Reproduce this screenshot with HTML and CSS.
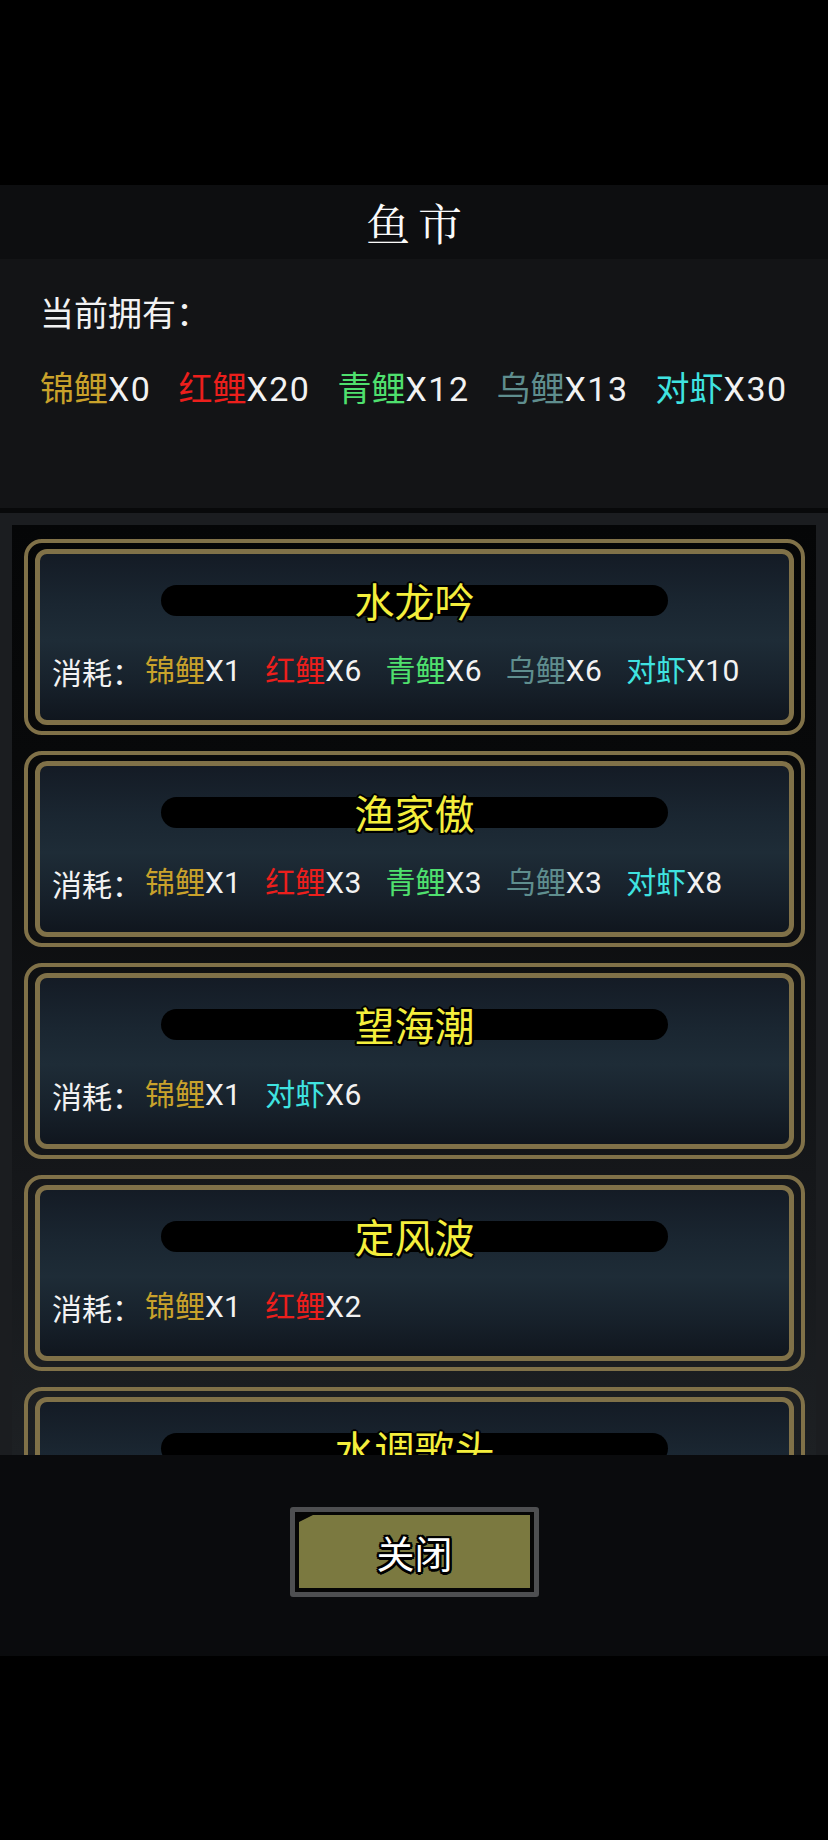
FILE: index.html
```html
<!DOCTYPE html>
<html lang="zh-CN">
<head>
<meta charset="utf-8">
<title>鱼市</title>
<link rel="stylesheet" href="styles.css">
</head>
<body>
<div class="screen">
  <div class="top-space"></div>
  <div class="titlebar"><span class="title">鱼市</span></div>
  <div class="owned">
    <div class="owned-label">当前拥有：</div>
    <div class="owned-row">
      <span class="item"><span class="c-gold">锦鲤</span><span class="num">X0</span></span>
      <span class="item"><span class="c-red">红鲤</span><span class="num">X20</span></span>
      <span class="item"><span class="c-green">青鲤</span><span class="num">X12</span></span>
      <span class="item"><span class="c-grey">乌鲤</span><span class="num">X13</span></span>
      <span class="item"><span class="c-cyan">对虾</span><span class="num">X30</span></span>
    </div>
  </div>
  <div class="sep"></div>
  <div class="list">
    <div class="list-inner">
      <div class="card"><div class="card-inner">
        <div class="pill"><span class="card-title">水龙吟</span></div>
        <div class="cost"><span class="cost-label">消耗：</span><span class="item"><span class="c-gold">锦鲤</span><span class="num">X1</span></span><span class="item"><span class="c-red">红鲤</span><span class="num">X6</span></span><span class="item"><span class="c-green">青鲤</span><span class="num">X6</span></span><span class="item"><span class="c-grey">乌鲤</span><span class="num">X6</span></span><span class="item"><span class="c-cyan">对虾</span><span class="num">X10</span></span></div>
      </div></div>
      <div class="card"><div class="card-inner">
        <div class="pill"><span class="card-title">渔家傲</span></div>
        <div class="cost"><span class="cost-label">消耗：</span><span class="item"><span class="c-gold">锦鲤</span><span class="num">X1</span></span><span class="item"><span class="c-red">红鲤</span><span class="num">X3</span></span><span class="item"><span class="c-green">青鲤</span><span class="num">X3</span></span><span class="item"><span class="c-grey">乌鲤</span><span class="num">X3</span></span><span class="item"><span class="c-cyan">对虾</span><span class="num">X8</span></span></div>
      </div></div>
      <div class="card"><div class="card-inner">
        <div class="pill"><span class="card-title">望海潮</span></div>
        <div class="cost"><span class="cost-label">消耗：</span><span class="item"><span class="c-gold">锦鲤</span><span class="num">X1</span></span><span class="item"><span class="c-cyan">对虾</span><span class="num">X6</span></span></div>
      </div></div>
      <div class="card"><div class="card-inner">
        <div class="pill"><span class="card-title">定风波</span></div>
        <div class="cost"><span class="cost-label">消耗：</span><span class="item"><span class="c-gold">锦鲤</span><span class="num">X1</span></span><span class="item"><span class="c-red">红鲤</span><span class="num">X2</span></span></div>
      </div></div>
      <div class="card"><div class="card-inner">
        <div class="pill"><span class="card-title">水调歌头</span></div>
        <div class="cost"><span class="cost-label">消耗：</span><span class="item"><span class="c-gold">锦鲤</span><span class="num">X1</span></span></div>
      </div></div>
    </div>
  </div>
  <div class="bottombar">
    <div class="btn"><div class="btn-face"><span class="btn-text">关闭</span></div></div>
  </div>
</div>
</body>
</html>
```
FILE: styles.css
```css
html, body {
  margin: 0;
  padding: 0;
  background: #000;
}
body {
  font-family: Roboto, "Noto Sans CJK SC", sans-serif;
  color: #f2f2f2;
}
.screen {
  width: 828px;
  height: 1840px;
  background: #000;
  overflow: hidden;
}
.top-space {
  height: 185px;
}
.titlebar {
  height: 74px;
  background: #0d0e10;
  display: flex;
  align-items: center;
  justify-content: center;
}
.title {
  font-family: "Noto Serif CJK SC", "Noto Sans CJK SC", serif;
  font-size: 44px;
  line-height: 50px;
  color: #fafafa;
  letter-spacing: 8px;
  padding-left: 8px;
  font-weight: 400;
}
.owned {
  height: 249px;
  box-sizing: border-box;
  background: #131416;
  padding: 33px 0 0 40px;
}
.owned-label {
  font-family: "Noto Sans CJK SC", sans-serif;
  font-size: 34px;
  line-height: 40px;
}
.owned-row {
  margin-top: 37px;
  font-size: 34px;
  line-height: 40px;
  display: flex;
  white-space: nowrap;
}
.owned-row .item {
  margin-right: 27px;
}
.owned-row .num {
  letter-spacing: 1.5px;
}
.c-gold { color: #c9a22b; }
.c-red { color: #ec1f1c; }
.c-green { color: #4fe06e; }
.c-grey { color: #5f8e8e; }
.c-cyan { color: #3fe3e0; }
.sep {
  height: 5px;
  background: #08090a;
}
.list {
  height: 942px;
  box-sizing: border-box;
  background: #1b1d20;
  padding: 12px 12px 0 12px;
  overflow: hidden;
}
.list-inner {
  height: 100%;
  box-sizing: border-box;
  background: linear-gradient(#050607 0%, #08090a 25%, #15171a 70%, #1d2023 100%);
  padding: 14px 11px 0 12px;
  display: flex;
  flex-direction: column;
  gap: 16px;
  overflow: hidden;
}
.card {
  flex-shrink: 0;
  height: 196px;
  box-sizing: border-box;
  border: 4px solid #807148;
  border-radius: 18px;
  padding: 6px 7px;
}
.card-inner {
  height: 100%;
  box-sizing: border-box;
  border: 5px solid #807148;
  border-radius: 12px;
  background: linear-gradient(#141b25 0%, #1a2631 30%, #1e2c37 52%, #17212b 78%, #10161e 100%);
  padding-top: 31px;
}
.pill {
  width: 507px;
  height: 31px;
  margin: 0 auto;
  background: #000;
  border-radius: 16px;
  display: flex;
  align-items: center;
  justify-content: center;
}
.card-title {
  font-family: "Noto Sans CJK SC", sans-serif;
  font-size: 40px;
  line-height: 31px;
  color: #f4ee3c;
  text-shadow: 2px 0 0 #000, -2px 0 0 #000, 0 2px 0 #000, 0 -2px 0 #000,
    1.5px 1.5px 0 #000, -1.5px 1.5px 0 #000, 1.5px -1.5px 0 #000, -1.5px -1.5px 0 #000;
}
.cost {
  margin-top: 37px;
  padding-left: 12px;
  font-size: 30px;
  line-height: 36px;
  display: flex;
  white-space: nowrap;
}
.cost-label {
  font-family: "Noto Sans CJK SC", sans-serif;
  margin-right: 3px;
}
.cost .item {
  margin-right: 24px;
}
.cost .num {
  letter-spacing: 0.3px;
}
.bottombar {
  height: 201px;
  box-sizing: border-box;
  background: #0a0b0d;
  padding-top: 52px;
  display: flex;
  justify-content: center;
}
.btn {
  width: 249px;
  height: 90px;
  box-sizing: border-box;
  border: 5px solid #4e4f51;
  border-radius: 3px;
  background: #050505;
  padding: 3px 4px 4px 4px;
  margin-left: 1px;
}
.btn-face {
  height: 100%;
  background: #7b7940;
  clip-path: polygon(14px 0, 100% 0, 100% 100%, 0 100%, 0 7px);
  display: flex;
  align-items: center;
  justify-content: center;
}
.btn-text {
  font-family: "Noto Sans CJK SC", sans-serif;
  font-size: 38px;
  line-height: 44px;
  color: #fff;
  text-shadow: 2.5px 0 0 #000, -2.5px 0 0 #000, 0 2.5px 0 #000, 0 -2.5px 0 #000,
    2px 2px 0 #000, -2px 2px 0 #000, 2px -2px 0 #000, -2px -2px 0 #000;
}
```
